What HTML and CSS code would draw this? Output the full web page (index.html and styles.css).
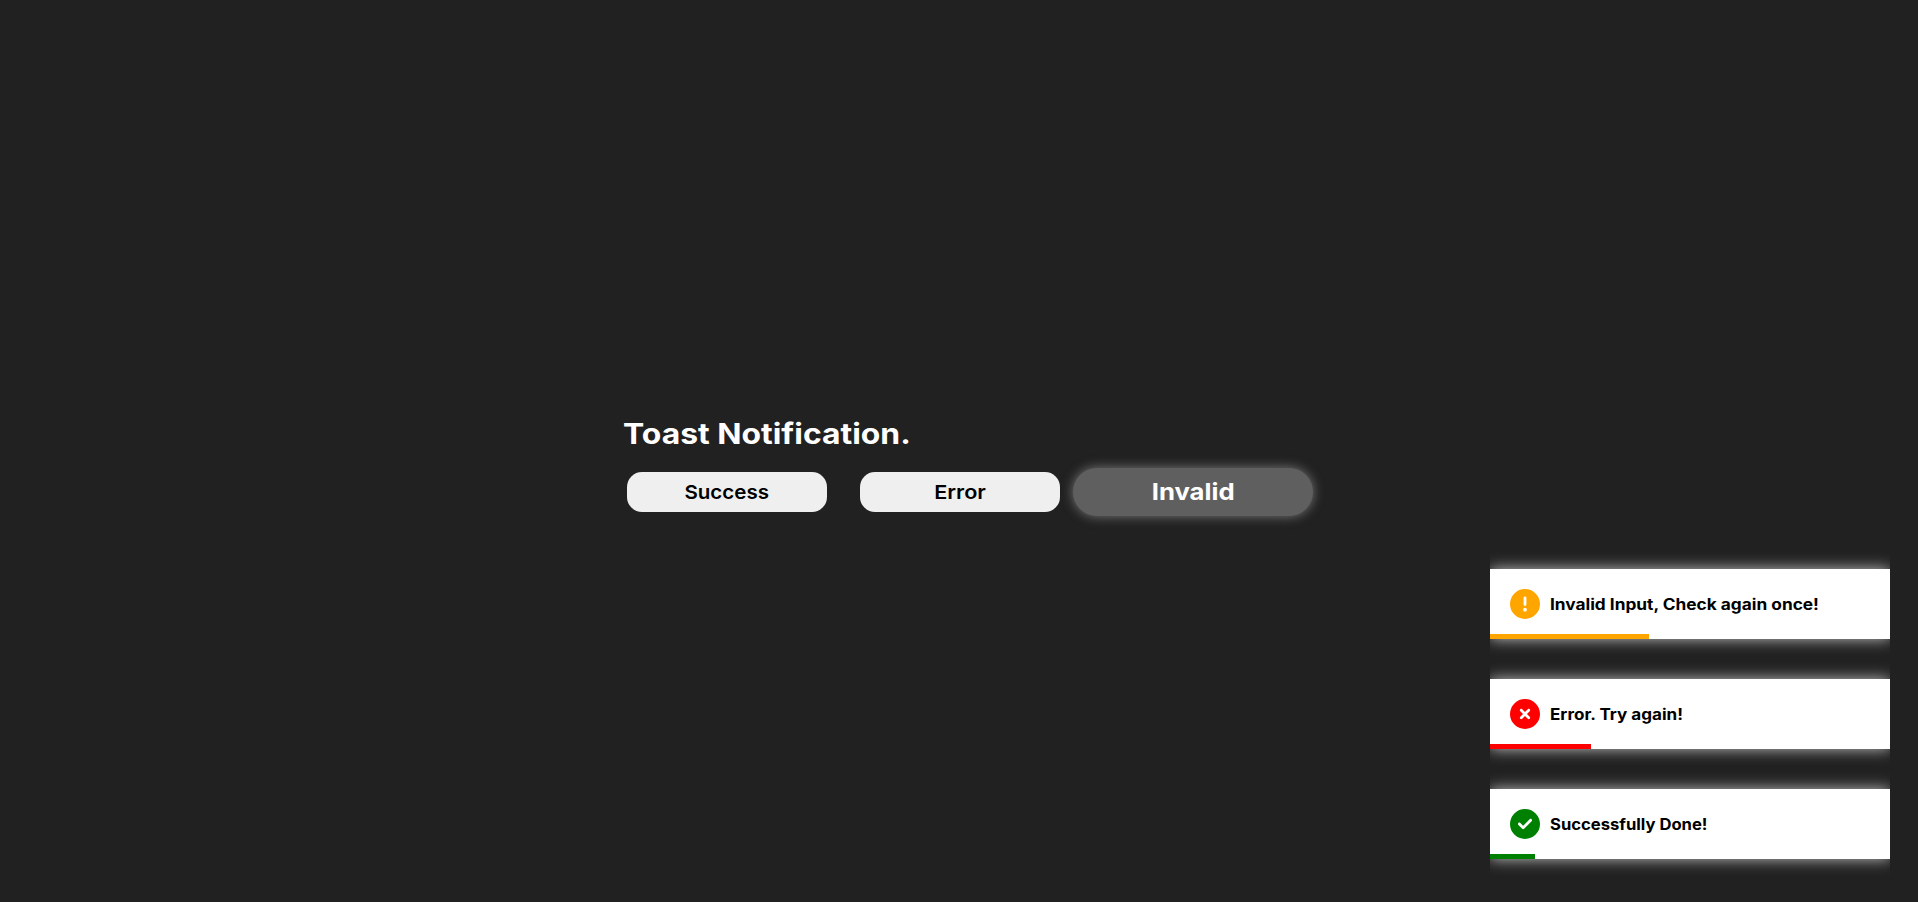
FILE: index.html
```html
<!DOCTYPE html>
<html lang="en">
<head>
<meta charset="utf-8">
<title>Toast Notification</title>
<link rel="stylesheet" href="styles.css">
</head>
<body>
<main class="container">
  <h1 class="title"><span>Toast Notification.</span></h1>
  <div class="buttons">
    <button class="btn"><span class="t-success">Success</span></button>
    <button class="btn"><span class="t-error">Error</span></button>
    <button class="btn active"><span class="t-invalid">Invalid</span></button>
  </div>
</main>
<div class="toast-box">
  <div class="toast invalid">
    <svg class="icon" viewBox="0 0 512 512"><path d="M256 512A256 256 0 1 0 256 0a256 256 0 1 0 0 512zm0-384c13.3 0 24 10.7 24 24V264c0 13.3-10.7 24-24 24s-24-10.7-24-24V152c0-13.3 10.7-24 24-24zM224 352a32 32 0 1 1 64 0 32 32 0 1 1 -64 0z"/></svg>
    <span class="msg">Invalid Input, Check again once!</span>
  </div>
  <div class="toast error">
    <svg class="icon" viewBox="0 0 512 512"><path d="M256 512A256 256 0 1 0 256 0a256 256 0 1 0 0 512zM175 175c9.4-9.4 24.6-9.4 33.9 0l47 47 47-47c9.4-9.4 24.6-9.4 33.9 0s9.4 24.6 0 33.9l-47 47 47 47c9.4 9.4 9.4 24.6 0 33.9s-24.6 9.4-33.9 0l-47-47-47 47c-9.4 9.4-24.6 9.4-33.9 0s-9.4-24.6 0-33.9l47-47-47-47c-9.4-9.4-9.4-24.6 0-33.9z"/></svg>
    <span class="msg">Error. Try again!</span>
  </div>
  <div class="toast success">
    <svg class="icon" viewBox="0 0 512 512"><path d="M256 512A256 256 0 1 0 256 0a256 256 0 1 0 0 512zM369 209L241 337c-9.4 9.4-24.6 9.4-33.9 0l-64-64c-9.4-9.4-9.4-24.6 0-33.9s24.6-9.4 33.9 0l47 47L335 175c9.4-9.4 24.6-9.4 33.9 0s9.4 24.6 0 33.9z"/></svg>
    <span class="msg">Successfully Done!</span>
  </div>
</div>
</body>
</html>
```
FILE: styles.css
```css
* { margin: 0; padding: 0; box-sizing: border-box; }
body {
  height: 902px;
  background: #212121;
  font-family: Inter, "Open Sans", sans-serif;
  display: flex;
  align-items: center;
  justify-content: center;
  overflow: hidden;
}
.container { width: 670px; margin-top: 26px; }
.title { height: 56px; line-height: 36px; font-size: 29px; font-weight: 700; color: #fff; white-space: nowrap; }
.title span { display: inline-block; margin-left: -1px; transform-origin: left; transform: scaleX(1.099); }
.buttons { display: flex; gap: 33px; padding-left: 3px; }
.btn {
  width: 200px; height: 40px; flex: none;
  border: 0; border-radius: 15px;
  background: #efefef; color: #000;
  font: 600 19.3px Inter, "Open Sans", sans-serif;
}
.btn span { display: inline-block; }
.t-success { transform: scaleX(1.065); }
.t-error { transform: scaleX(1.12); }
.t-invalid { transform: scaleX(1.11); }
.btn.active {
  transform: scale(1.2);
  border-radius: 20px;
  background: #5f5f5f; color: #fff;
  font-weight: 700;
  box-shadow: 0 0 10px #7a7a7a;
}
.toast-box {
  position: absolute; right: 28px; bottom: 23px;
  width: 400px; padding: 20px 0;
  display: flex; flex-direction: column; gap: 40px;
  overflow: hidden;
}
.toast {
  position: relative; height: 70px; padding-left: 20px;
  display: flex; align-items: center; gap: 10px;
  background: #fff; color: #000;
  box-shadow: 0 0 14px #c4c4c4;
}
.toast::after { content: ""; position: absolute; left: 0; bottom: 0; height: 5px; background: currentColor; }
.icon { width: 30px; height: 30px; fill: currentColor; fill-rule: evenodd; }
.msg { color: #000; font-size: 15.4px; font-weight: 700; white-space: nowrap; transform-origin: left; }
.invalid { color: orange; }
.error { color: red; }
.success { color: green; }
.invalid .msg { transform: scaleX(1.122); }
.error .msg { transform: scaleX(1.107); }
.success .msg { transform: scaleX(1.08); }
.invalid::after { width: 159px; }
.error::after { width: 101px; }
.success::after { width: 45px; }
```
